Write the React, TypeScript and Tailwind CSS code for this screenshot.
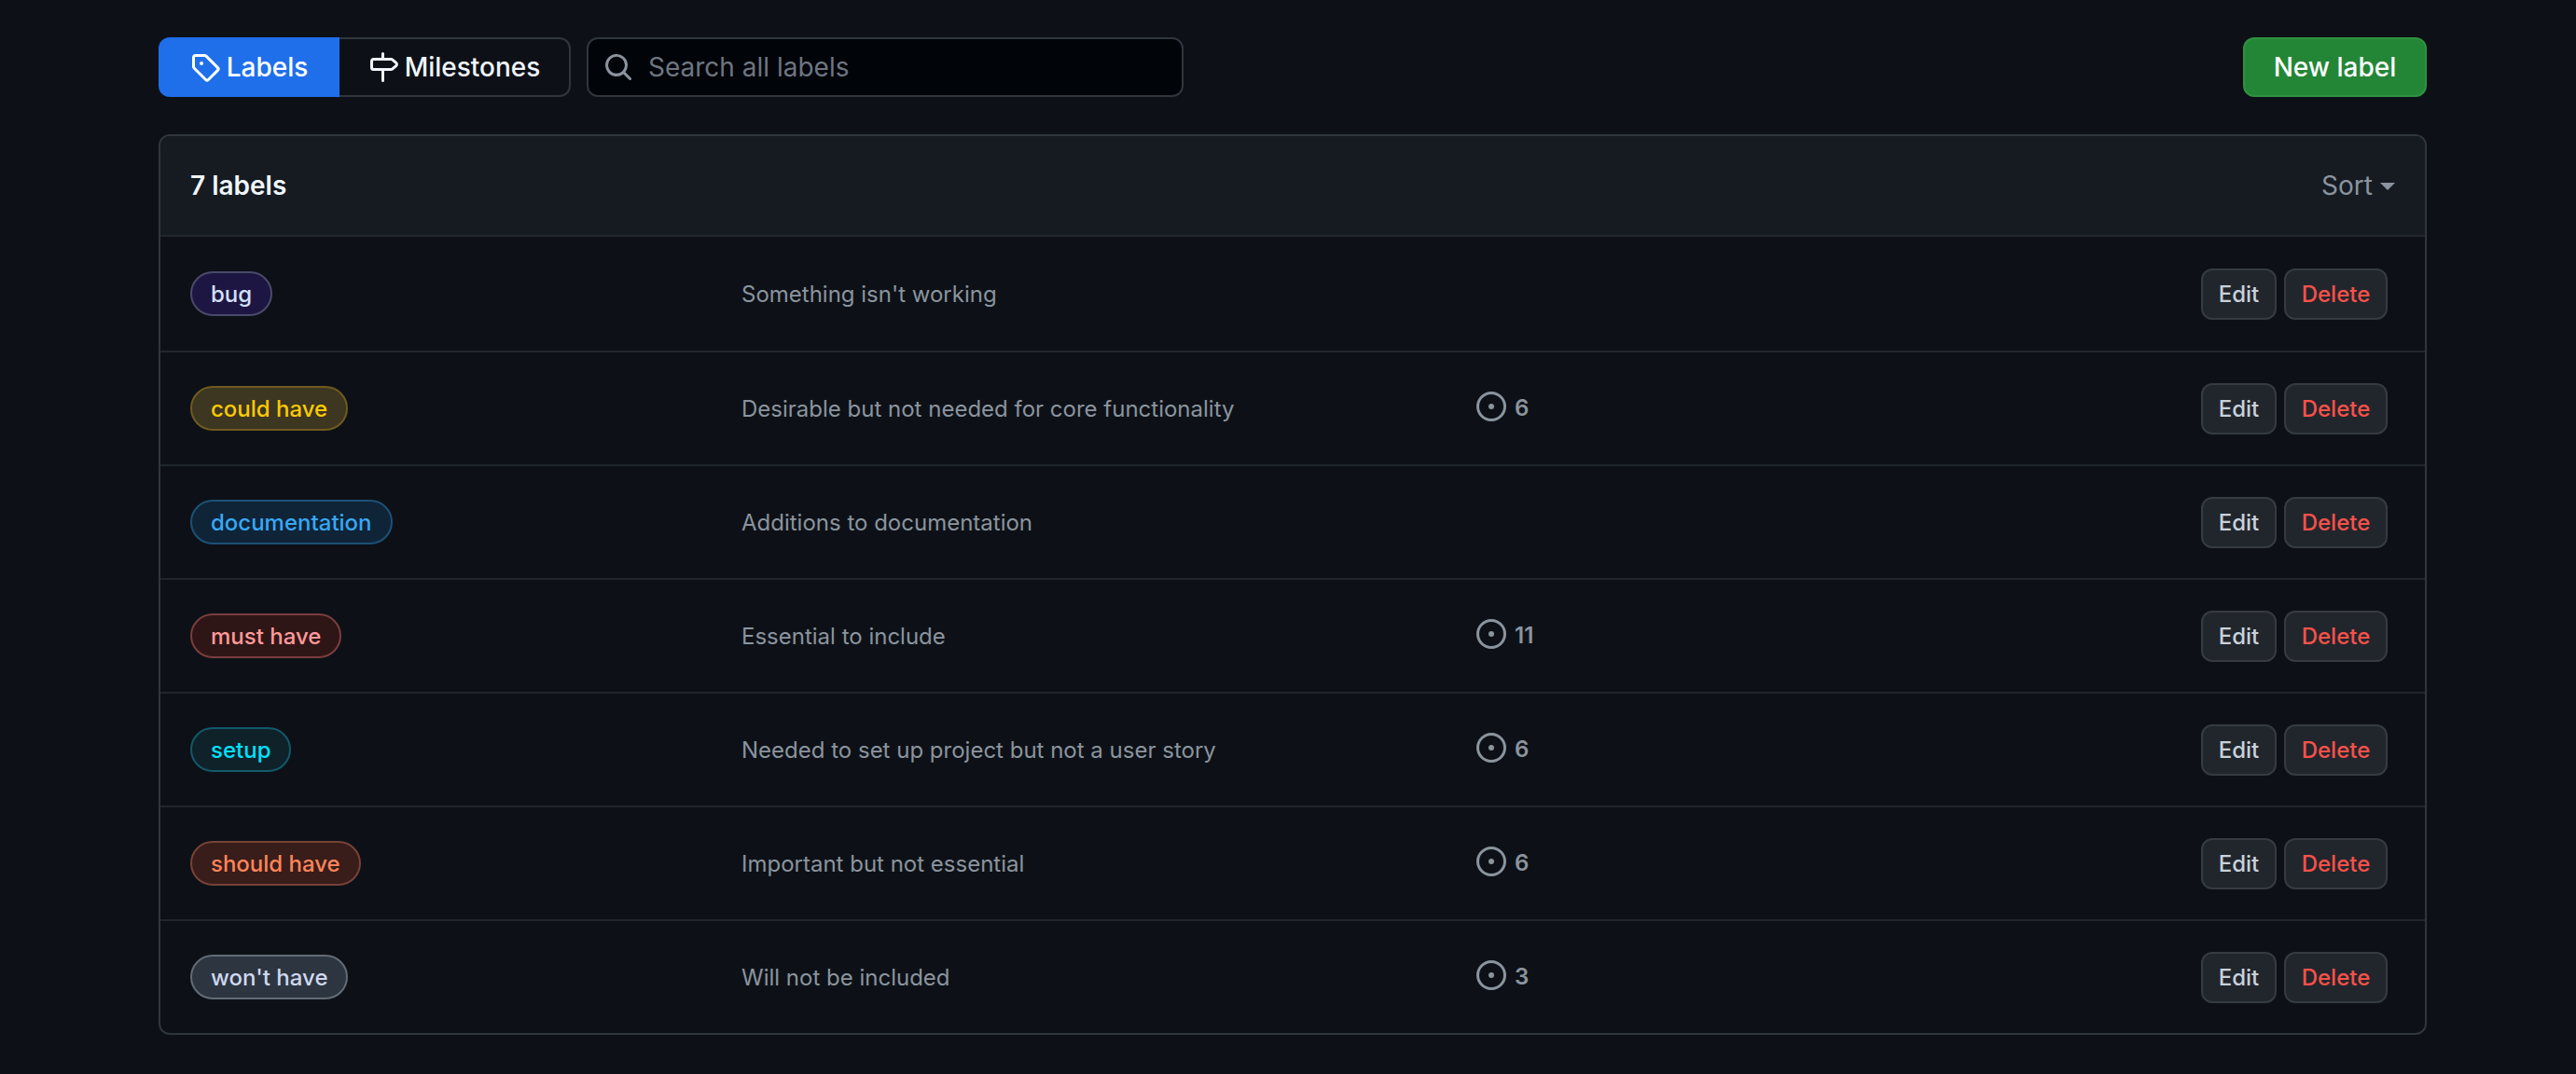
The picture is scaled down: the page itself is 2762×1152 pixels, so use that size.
type Label = {
  name: string;
  description: string;
  count?: number;
  className: string;
};

const labels: Label[] = [
  { name: 'bug', description: "Something isn't working", className: 'bg-[#1e1642] border-[#4a4a6a] text-[#d4e0fa]' },
  { name: 'could have', description: 'Desirable but not needed for core functionality', count: 6, className: 'bg-[#3d3620] border-[#6f5a20] text-[#fbca04]' },
  { name: 'documentation', description: 'Additions to documentation', className: 'bg-[#0f2437] border-[#1d5078] text-[#37a8f5]' },
  { name: 'must have', description: 'Essential to include', count: 11, className: 'bg-[#2f1616] border-[#7a3d3d] text-[#ff9a9a]' },
  { name: 'setup', description: 'Needed to set up project but not a user story', count: 6, className: 'bg-[#0f2229] border-[#12596b] text-[#00e1ff]' },
  { name: 'should have', description: 'Important but not essential', count: 6, className: 'bg-[#381d1a] border-[#774238] text-[#ff8559]' },
  { name: "won't have", description: 'Will not be included', count: 3, className: 'bg-[#2d3640] border-[#636c76] text-[#cfd8f0]' },
];

// Octicons, 16px grid
function Icon({ d, className }: { d: string; className: string }) {
  return (
    <svg viewBox="0 0 16 16" fill="currentColor" className={className}>
      <path d={d} />
    </svg>
  );
}

const tagPath =
  'M1 7.775V2.75C1 1.784 1.784 1 2.75 1h5.025c.464 0 .91.184 1.238.513l6.25 6.25a1.75 1.75 0 0 1 0 2.474l-5.026 5.026a1.75 1.75 0 0 1-2.474 0l-6.25-6.25A1.752 1.752 0 0 1 1 7.775Zm1.5 0c0 .066.026.13.073.177l6.25 6.25a.25.25 0 0 0 .354 0l5.025-5.025a.25.25 0 0 0 0-.354l-6.25-6.25a.25.25 0 0 0-.177-.073H2.75a.25.25 0 0 0-.25.25ZM6 5a1 1 0 1 1 0 2 1 1 0 0 1 0-2Z';
const milestonePath =
  'M7.75 0a.75.75 0 0 1 .75.75V3h3.634c.414 0 .814.147 1.13.414l2.07 1.75a1.75 1.75 0 0 1 0 2.672l-2.07 1.75a1.75 1.75 0 0 1-1.13.414H8.5v5.25a.75.75 0 0 1-1.5 0V10H2.75A1.75 1.75 0 0 1 1 8.25v-3.5C1 3.784 1.784 3 2.75 3H7V.75A.75.75 0 0 1 7.75 0Zm4.384 8.5a.25.25 0 0 0 .161-.06l2.07-1.75a.25.25 0 0 0 0-.38l-2.07-1.75a.25.25 0 0 0-.161-.06H2.75a.25.25 0 0 0-.25.25v3.5c0 .138.112.25.25.25h9.384Z';
const searchPath =
  'M10.68 11.74a6 6 0 0 1-7.922-8.982 6 6 0 0 1 8.982 7.922l3.04 3.04a.749.749 0 0 1-.326 1.275.749.749 0 0 1-.734-.215ZM11.5 7a4.499 4.499 0 1 0-8.997 0A4.499 4.499 0 0 0 11.5 7Z';
const issuePath =
  'M8 9.5a1.5 1.5 0 1 0 0-3 1.5 1.5 0 0 0 0 3ZM8 0a8 8 0 1 1 0 16A8 8 0 0 1 8 0ZM1.5 8a6.5 6.5 0 1 0 13 0 6.5 6.5 0 0 0-13 0Z';

function LabelRow({ label }: { label: Label }) {
  return (
    <div className="flex h-[122px] items-center border-t-2 border-[#21262d] pl-[32px] pr-[40px] first-of-type:h-[124px]">
      <div className="w-[591px] shrink-0">
        <span className={`inline-flex h-[48px] items-center rounded-full border-2 px-[20px] pt-[1px] text-[24px] font-medium ${label.className}`}>
          {label.name}
        </span>
      </div>
      <div className="w-[788px] shrink-0 pt-[1px] text-[24px] text-[#8b949e]">{label.description}</div>
      <div className="flex flex-1 items-center gap-[9px] text-[24px] font-semibold text-[#8b949e]">
        {label.count !== undefined && (
          <>
            <Icon d={issuePath} className="size-[32px] -translate-y-[2px]" />
            <span>{label.count}</span>
          </>
        )}
      </div>
      <div className="flex gap-[8px]">
        <button className="h-[55px] w-[81px] rounded-[12px] border-2 border-[#363b42] bg-[#21262d] pt-[1px] text-[24px] font-medium text-[#c9d1d9]">
          Edit
        </button>
        <button className="h-[55px] w-[111px] rounded-[12px] border-2 border-[#363b42] bg-[#21262d] pt-[1px] text-[24px] font-medium text-[#f85149]">
          Delete
        </button>
      </div>
    </div>
  );
}

export default function App() {
  return (
    <main className="min-h-screen bg-[#0d1117] pl-[170px] pr-[160px] pt-[40px] font-['Inter',sans-serif]">
      <div className="flex h-[64px] items-stretch">
        <nav className="flex w-[442px] text-[28px] font-medium text-[#f0f6fc]">
          <a className="flex w-[194px] items-center justify-center gap-[7px] rounded-l-[12px] bg-[#1f6feb] text-white">
            <Icon d={tagPath} className="size-[32px]" />
            Labels
          </a>
          <a className="flex flex-1 items-center justify-center gap-[7px] rounded-r-[12px] border-y-2 border-r-2 border-[#30363d]">
            <Icon d={milestonePath} className="size-[32px]" />
            Milestones
          </a>
        </nav>
        <div className="ml-[17px] flex w-[640px] items-center gap-[16px] rounded-[12px] border-2 border-[#30363d] bg-[#010409] pl-[16px] text-[28px] text-[#6e7681]">
          <Icon d={searchPath} className="size-[32px] text-[#8b949e]" />
          <span>Search all labels</span>
        </div>
        <button className="ml-auto w-[197px] rounded-[12px] border-2 border-[#2f9240] bg-[#238636] text-[28px] font-medium text-white">
          New label
        </button>
      </div>

      <section className="mt-[40px] overflow-hidden rounded-[12px] border-2 border-[#30363d]">
        <header className="flex h-[106px] items-center justify-between bg-[#161b22] pl-[32px] pr-[32px]">
          <h2 className="text-[28px] font-semibold text-[#f0f6fc]">7 labels</h2>
          <div className="flex items-center gap-[8px] text-[28px] text-[#8b949e]">
            Sort
            <span className="mt-[2px] size-0 border-x-[8px] border-t-[8px] border-x-transparent border-t-[#8b949e]" />
          </div>
        </header>
        {labels.map(label => (
          <LabelRow key={label.name} label={label} />
        ))}
      </section>
    </main>
  );
}
